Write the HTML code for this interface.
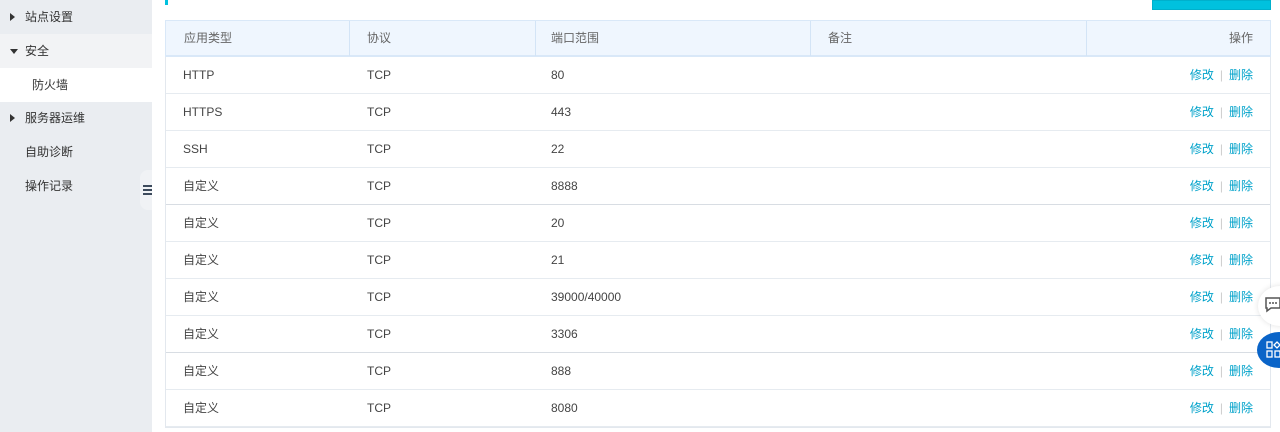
<!DOCTYPE html>
<html><head><meta charset="utf-8"><style>
*{margin:0;padding:0;box-sizing:border-box}
body{width:1280px;height:432px;overflow:hidden;background:#fff;font-family:"Liberation Sans","Noto Sans CJK SC",sans-serif;font-size:12px;color:#333;position:relative}
.side{position:absolute;left:0;top:0;width:152px;height:432px;background:#eaedf1}
.item{position:absolute;left:0;width:152px;height:34px;line-height:34px;padding-left:25px;color:#333}
.tri{position:absolute;left:10px;top:13px;width:0;height:0;border-top:4px solid transparent;border-bottom:4px solid transparent;border-left:5px solid #333}
.tri.d{top:15px;border-left:4px solid transparent;border-right:4px solid transparent;border-top:5px solid #333;border-bottom:0}
.tbl{position:absolute;left:165px;top:20px;width:1106px;border:1px solid #e3e8ee;border-top:0;color:#444}
.hd{height:37px;background:#eff6fe;border:1px solid #d9e8f8;border-bottom:2px solid #d9e8f8;position:relative;margin-left:-1px;margin-right:-1px;color:#666}
.row{height:37px;border-bottom:1px solid #e6ebf0;position:relative}
.c{position:absolute;top:0;line-height:37px}
.hd .c{line-height:35px}
.sep{position:absolute;top:0;width:1px;height:35px;background:#d3e4f6}
.op{position:absolute;right:17px;top:0;line-height:37px;color:#00a2ca}
.op i{font-style:normal;color:#ccc;margin:0 6px}
</style></head><body>
<div class="side">
<div class="item" style="top:0"><span class="tri"></span>站点设置</div>
<div class="item" style="top:34px;background:#f2f3f5"><span class="tri d"></span>安全</div>
<div class="item" style="top:68px;background:#fff;padding-left:32px">防火墙</div>
<div class="item" style="top:101px"><span class="tri"></span>服务器运维</div>
<div class="item" style="top:135px">自助诊断</div>
<div class="item" style="top:169px">操作记录</div>
</div>
<div style="position:absolute;left:140px;top:170px;width:12px;height:40px;background:#f0f2f5;border-radius:8px 0 0 8px"></div>
<div style="position:absolute;left:143px;top:185px;width:9px;height:2px;background:#3c4a5c;box-shadow:0 4px 0 #3c4a5c,0 8px 0 #3c4a5c"></div>
<div style="position:absolute;left:165px;top:0;width:3px;height:5px;background:#00c1de"></div>
<div style="position:absolute;left:1152px;top:0;width:119px;height:10px;background:#00c1de;border:1px solid #00b0cc"></div>
<div class="tbl">
<div class="hd">
<span class="c" style="left:18px">应用类型</span><span class="sep" style="left:183px"></span>
<span class="c" style="left:201px">协议</span><span class="sep" style="left:369px"></span>
<span class="c" style="left:385px">端口范围</span><span class="sep" style="left:644px"></span>
<span class="c" style="left:662px">备注</span><span class="sep" style="left:920px"></span>
<span class="c" style="right:17px">操作</span>
</div>
<div class="row"><span class="c" style="left:17px">HTTP</span><span class="c" style="left:201px">TCP</span><span class="c" style="left:385px">80</span><span class="op">修改<i>|</i>删除</span></div>
<div class="row"><span class="c" style="left:17px">HTTPS</span><span class="c" style="left:201px">TCP</span><span class="c" style="left:385px">443</span><span class="op">修改<i>|</i>删除</span></div>
<div class="row"><span class="c" style="left:17px">SSH</span><span class="c" style="left:201px">TCP</span><span class="c" style="left:385px">22</span><span class="op">修改<i>|</i>删除</span></div>
<div class="row" style="border-bottom-color:#d8dde3"><span class="c" style="left:17px">自定义</span><span class="c" style="left:201px">TCP</span><span class="c" style="left:385px">8888</span><span class="op">修改<i>|</i>删除</span></div>
<div class="row"><span class="c" style="left:17px">自定义</span><span class="c" style="left:201px">TCP</span><span class="c" style="left:385px">20</span><span class="op">修改<i>|</i>删除</span></div>
<div class="row"><span class="c" style="left:17px">自定义</span><span class="c" style="left:201px">TCP</span><span class="c" style="left:385px">21</span><span class="op">修改<i>|</i>删除</span></div>
<div class="row"><span class="c" style="left:17px">自定义</span><span class="c" style="left:201px">TCP</span><span class="c" style="left:385px">39000/40000</span><span class="op">修改<i>|</i>删除</span></div>
<div class="row" style="border-bottom-color:#d8dde3"><span class="c" style="left:17px">自定义</span><span class="c" style="left:201px">TCP</span><span class="c" style="left:385px">3306</span><span class="op">修改<i>|</i>删除</span></div>
<div class="row"><span class="c" style="left:17px">自定义</span><span class="c" style="left:201px">TCP</span><span class="c" style="left:385px">888</span><span class="op">修改<i>|</i>删除</span></div>
<div class="row"><span class="c" style="left:17px">自定义</span><span class="c" style="left:201px">TCP</span><span class="c" style="left:385px">8080</span><span class="op">修改<i>|</i>删除</span></div>
</div>
<div style="position:absolute;left:1258px;top:286px;width:44px;height:40px;border-radius:50%;background:#fff;box-shadow:0 0 6px rgba(0,0,0,.12)"></div>
<svg style="position:absolute;left:1265px;top:297px" width="15" height="16" viewBox="0 0 15 16"><path d="M1 1h14v10H6l-4 3v-3H1z" fill="none" stroke="#555" stroke-width="1.5"/><circle cx="5" cy="6" r="1" fill="#555"/><circle cx="8" cy="6" r="1" fill="#555"/><circle cx="11" cy="6" r="1" fill="#555"/></svg>
<div style="position:absolute;left:1257px;top:332px;width:44px;height:36px;border-radius:50%;background:#0a64c8"></div>
<svg style="position:absolute;left:1266px;top:341px" width="14" height="18" viewBox="0 0 14 18"><rect x="1" y="1" width="5" height="6" fill="none" stroke="#fff" stroke-width="1.3"/><rect x="1" y="10" width="5" height="6" fill="none" stroke="#fff" stroke-width="1.3"/><rect x="9" y="10" width="5" height="6" fill="none" stroke="#fff" stroke-width="1.3"/><path d="M11 1l3 3-3 3-3-3z" fill="none" stroke="#fff" stroke-width="1.3"/></svg>
</body></html>
